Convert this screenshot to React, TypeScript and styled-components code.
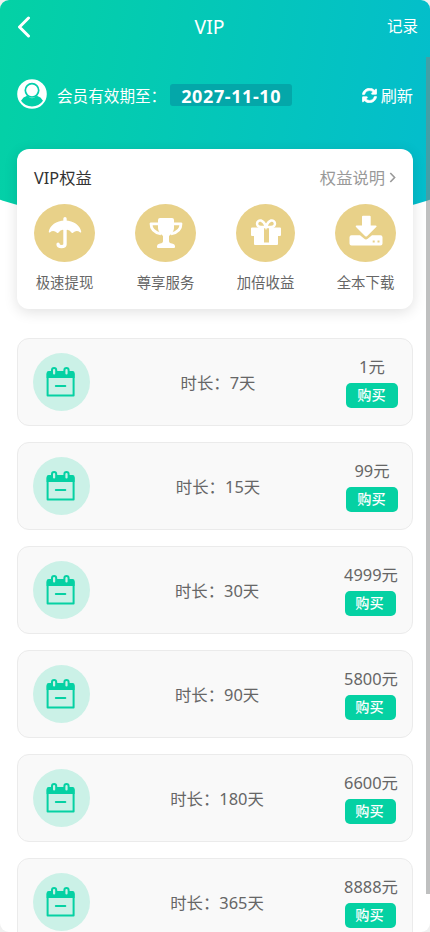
import React from "react";
import styled, { createGlobalStyle } from "styled-components";

const Global = createGlobalStyle`
  * { box-sizing: border-box; }
  html { background: #f0f0f0; }
  body { margin: 0; overflow: hidden; font-family: "Noto Sans", "Noto Sans CJK SC", sans-serif; color: #666; }
`;

const Page = styled.main`
  position: relative;
  width: 430px;
  height: 932px;
  overflow: hidden;
  border-radius: 9px;
  background: #fff;
`;

const Hero = styled.header`
  position: relative;
  height: 149px;
  color: #fff;
  &::before {
    content: "";
    position: absolute;
    top: 0;
    left: -86px;
    width: 602px;
    height: 228px;
    border-radius: 0 0 50% 50% / 0 0 94px 94px;
    background: linear-gradient(100deg, #04d1a5 14%, #04bdcd 86%);
  }
`;

const NavBar = styled.nav`
  position: relative;
  display: grid;
  grid-template-columns: 100px 1fr 100px;
  align-items: center;
  height: 53px;
  padding: 0 12px 0 16px;
`;

const BackIcon = styled.svg`
  width: 15px;
  height: 22px;
`;

const Title = styled.h1`
  margin: 0 15px 0 0;
  text-align: center;
  font-size: 19.4px;
  font-weight: 400;
  line-height: 26px;
`;

const Records = styled.span`
  margin-top: -2px;
  text-align: right;
  font-size: 15.5px;
  line-height: 22px;
`;

const Member = styled.div`
  position: relative;
  display: flex;
  align-items: center;
  height: 84px;
  padding: 0 17px;
  font-size: 15.6px;
`;

const Avatar = styled.svg`
  width: 30px;
  height: 30px;
  margin: -3px 10px 0 0;
`;

const Expiry = styled.strong`
  width: 122px;
  height: 22px;
  margin-left: 4px;
  border-radius: 3px;
  background: #04a7a9;
  text-align: center;
  font-size: 18px;
  letter-spacing: 0.6px;
  line-height: 24px;
`;

const Refresh = styled.span`
  display: flex;
  align-items: center;
  gap: 4px;
  margin-left: auto;
  font-size: 16.2px;
`;

const RefreshIcon = styled.svg`
  width: 15px;
  height: 15px;
`;

const Benefits = styled.section`
  position: relative;
  height: 160px;
  margin: 0 17px 29px;
  padding: 17px;
  border-radius: 12px;
  background: #fff;
  box-shadow: 0 3px 14px rgba(0, 0, 0, 0.12);
`;

const BenefitsHead = styled.div`
  display: flex;
  justify-content: space-between;
  align-items: center;
  height: 22px;
  color: #333;
  font-size: 16.3px;
`;

const More = styled.span`
  display: flex;
  align-items: center;
  gap: 4px;
  color: #999;
`;

const Chevron = styled.svg`
  width: 7px;
  height: 11px;
`;

const BenefitList = styled.div`
  display: flex;
  justify-content: space-between;
  margin-top: 16px;
`;

const Benefit = styled.div<{ $width: number }>`
  display: flex;
  flex-direction: column;
  align-items: center;
  width: ${(p) => p.$width}px;
  white-space: nowrap;
  font-size: 14.4px;
  line-height: 22px;
`;

const Medal = styled.div`
  display: grid;
  place-items: center;
  width: 100%;
  height: 58px;
  margin-bottom: 10px;
  border-radius: 50%;
  background: #e8d189;
  svg { width: 34px; height: 34px; fill: #fff; overflow: visible; }
`;

const Plans = styled.section`
  display: grid;
  gap: 16px;
  margin: 0 17px;
`;

const Plan = styled.article`
  display: flex;
  align-items: center;
  justify-content: space-between;
  height: 88px;
  padding: 0 14px 0 15px;
  border: 1px solid #ebebeb;
  border-radius: 12px;
  background: #f9f9f9;
  font-size: 16.4px;
`;

const PlanIcon = styled.div`
  display: grid;
  place-items: center;
  width: 57px;
  height: 58px;
  padding-right: 2px;
  border-radius: 50%;
  background: #cbf1e7;
`;

const Duration = styled.span`
  padding-top: 2px;
  line-height: 24px;
`;

const Purchase = styled.div`
  display: flex;
  flex-direction: column;
  align-items: center;
  line-height: 22px;
`;

const Buy = styled.button<{ $wide: boolean }>`
  width: ${(p) => (p.$wide ? 52 : 51)}px;
  height: 25px;
  margin: 5px ${(p) => (p.$wide ? 0 : 2)}px 0 0;
  padding: 0 1px 2px 0;
  border: 0;
  border-radius: 5px;
  background: #05d1a3;
  color: #fff;
  font: 500 14.2px/23px "Noto Sans CJK SC", sans-serif;
`;

const ScrollThumb = styled.div`
  position: absolute;
  top: 57px;
  right: 0;
  width: 4px;
  height: 837px;
  background: rgba(128, 130, 130, 0.5);
`;

const CalendarIcon = () => (
  <svg width="30" height="30" viewBox="0 0 30 30" fill="none">
    <path d="M1.600 7h26v21.500h-26z" stroke="#05d1a3" strokeWidth="2" strokeLinejoin="round" />
    <path d="M.6 6q0-2 2-2h24q2 0 2 2v5H.6z" fill="#05d1a3" />
    <rect x="6" y="1" width="4.200" height="7.500" rx="2.100" fill="#cbf1e7" stroke="#05d1a3" strokeWidth="2" />
    <rect x="18.400" y="1" width="4.200" height="7.500" rx="2.100" fill="#cbf1e7" stroke="#05d1a3" strokeWidth="2" />
    <path d="M9.800 19h9.500" stroke="#05d1a3" strokeWidth="2" strokeLinecap="round" />
  </svg>
);

const benefits = [
  {
    name: "极速提现", width: 61,
    icon: <svg viewBox="0 0 34 34"><path d="M17 4.500C26 4.500 32 9.500 33.200 15.500q.2 1.500-1 .9-3.700-3-7.200.4-.7.600-1.300 0Q20.500 12.500 17 14.500 13.500 12.500 10.300 16.800q-.6.600-1.300 0-3.500-3.400-7.200-.4-1.200.6-1-.9C2 9.500 8 4.500 17 4.500z" /><path d="M17 2.800v25.400c0 3.200-6.900 3.200-6.900 0" fill="none" stroke="#fff" strokeWidth="3.400" strokeLinecap="round" /></svg>,
  },
  {
    name: "尊享服务", width: 61,
    icon: <svg viewBox="0 0 34 34"><path d="M11 2h12q2 0 2 2v8q0 4-5 8v5q0 2 3 2.500 3 .5 3 3v.5q0 1-1 1H9q-1 0-1-1v-.5q0-2.500 3-3 3-.5 3-2.500v-5q-5-4-5-8V4q0-2 2-2z" /><path d="M9 7.800H2q0 8.200 10 10.200M25 7.800h7q0 8.200-10 10.200" fill="none" stroke="#fff" strokeWidth="2.800" strokeLinejoin="round" /></svg>,
  },
  {
    name: "加倍收益", width: 59,
    icon: <svg viewBox="0 0 34 34"><path fillRule="evenodd" d="M3 11.500h28q1 0 1 1V19q0 1-1 1h-2v8q0 1-1 1H6q-1 0-1-1v-8H3q-1 0-1-1v-6.500q0-1 1-1zm12 .5v14.500h5V12z" /><path d="M17 11H12C6 11 7.500 3.500 12 4.500q3 1 5 6.200 2-5.200 5-6.200c4.500-1 6 6.500 0 6.500z" fill="none" stroke="#fff" strokeWidth="2.500" /></svg>,
  },
  {
    name: "全本下载", width: 61,
    icon: <svg viewBox="0 0 34 34"><path d="M13 .8q0-1 1-1h6.700q1 0 1 1V9.500H26.500q2 0 .7 1.500l-9 9q-1.100 1-2.200 0l-9-9Q6 9.500 7.500 9.500H13z" /><path fillRule="evenodd" d="M2.500 19.200h8.500l4 3.400q2 1.700 4 0l4-3.400h8.500q2 0 2 2v6.300q0 2-2 2h-29q-2 0-2-2v-6.300q0-2 2-2zm21.200 5.300v2h2v-2zm4.800 0v2h2v-2z" /></svg>,
  },
];

const plans = [["7", "1"], ["15", "99"], ["30", "4999"], ["90", "5800"], ["180", "6600"], ["365", "8888"]];

export default function App() {
  return (
    <>
      <Global />
      <Page>
        <Hero>
          <NavBar>
            <BackIcon viewBox="0 0 15 22" fill="none"><path d="M12.500 2L3.500 11l9 9" stroke="#fff" strokeWidth="3" strokeLinecap="round" strokeLinejoin="round" /></BackIcon>
            <Title>VIP</Title>
            <Records>记录</Records>
          </NavBar>
          <Member>
            <Avatar viewBox="0 0 30 30">
              <path fillRule="evenodd" fill="#fff" d="M15 .2a14.800 14.800 0 100 29.600A14.800 14.800 0 0015 .2zM10.200 16.800Q15 21.500 19.800 16.800 24 18 26 21.800 22 27.500 15 27.500T4 21.800Q6 18 10.200 16.800z" />
              <circle cx="15" cy="11.300" r="6.700" fill="#fff" stroke="#04cfad" strokeWidth="1.700" />
            </Avatar>
            会员有效期至：
            <Expiry>2027-11-10</Expiry>
            <Refresh>
              <RefreshIcon viewBox="0 0 512 512" fill="#fff" stroke="#fff" strokeWidth="22"><path d="M370.700 133.300C339.500 104 298.900 88 255.800 88c-77.500.1-144.300 53.200-162.800 126.900-1.300 5.400-6.100 9.100-11.700 9.100H24.100c-7.500 0-13.200-6.800-11.800-14.200C33.900 94.900 134.800 8 256 8c66.400 0 126.800 26.100 171.300 68.700L463 41c15.100-15.100 41-4.400 41 17v134c0 13.300-10.700 24-24 24H346c-21.400 0-32.100-25.900-17-41zM32 296h134c21.400 0 32.100 25.900 17 41l-41.800 41.800c31.300 29.300 71.800 45.300 114.900 45.200 77.400-.1 144.300-53.100 162.800-126.800 1.300-5.400 6.100-9.200 11.700-9.200h57.300c7.500 0 13.200 6.800 11.800 14.200C478.100 417.100 377.200 504 256 504c-66.400 0-126.800-26.100-171.300-68.700L49 471c-15.100 15.100-41 4.400-41-17V320c0-13.300 10.700-24 24-24z" /></RefreshIcon>
              刷新
            </Refresh>
          </Member>
        </Hero>
        <Benefits>
          <BenefitsHead>
            <span>VIP权益</span>
            <More>权益说明<Chevron viewBox="0 0 7 11" fill="none"><path d="M1.300 1l4.300 4.500L1.300 10" stroke="#999" strokeWidth="1.600" /></Chevron></More>
          </BenefitsHead>
          <BenefitList>
            {benefits.map((b) => <Benefit key={b.name} $width={b.width}><Medal>{b.icon}</Medal>{b.name}</Benefit>)}
          </BenefitList>
        </Benefits>
        <Plans>
          {plans.map(([days, price]) => (
            <Plan key={days}>
              <PlanIcon><CalendarIcon /></PlanIcon>
              <Duration>时长：{days}天</Duration>
              <Purchase>{price}元<Buy $wide={price.length < 3}>购买</Buy></Purchase>
            </Plan>
          ))}
        </Plans>
        <ScrollThumb />
      </Page>
    </>
  );
}
